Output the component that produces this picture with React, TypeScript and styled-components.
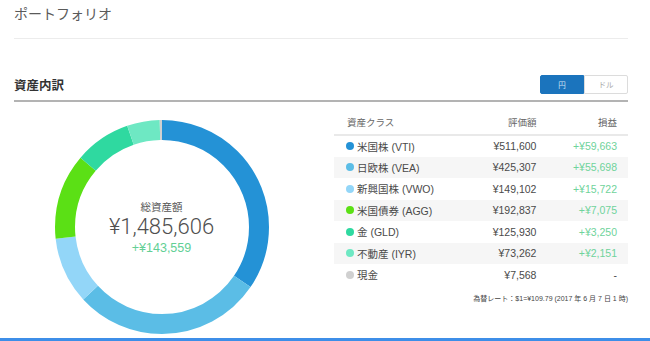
import React from "react";
import styled, { createGlobalStyle } from "styled-components";

const GlobalStyle = createGlobalStyle`
  body {
    margin: 0;
    background: #fff;
    font-family: "Liberation Sans", "Noto Sans CJK JP", sans-serif;
    color: #555;
  }
`;

type Asset = { name: string; color: string; value: number; gain: number | null };

const assets: Asset[] = [
  { name: "米国株 (VTI)", color: "#2492d6", value: 511600, gain: 59663 },
  { name: "日欧株 (VEA)", color: "#5bbde6", value: 425307, gain: 55698 },
  { name: "新興国株 (VWO)", color: "#93d6f8", value: 149102, gain: 15722 },
  { name: "米国債券 (AGG)", color: "#5be015", value: 192837, gain: 7075 },
  { name: "金 (GLD)", color: "#2fd9a0", value: 125930, gain: 3250 },
  { name: "不動産 (IYR)", color: "#6ee8c3", value: 73262, gain: 2151 },
  { name: "現金", color: "#d0d0d0", value: 7568, gain: null },
];

const yen = (n: number) => "¥" + n.toLocaleString("en-US");

const Page = styled.div`
  display: flex;
  flex-direction: column;
  height: 338px;
  padding: 0 22px 0 14px;
`;

const PageTitle = styled.h1`
  margin: 0;
  padding: 5px 0 0 0;
  height: 39px;
  box-sizing: border-box;
  border-bottom: 1px solid #ececec;
  font-size: 14px;
  font-weight: normal;
  color: #5a5a5a;
  line-height: 18px;
`;

const SectionHeader = styled.div`
  display: flex;
  align-items: center;
  justify-content: space-between;
  margin-top: 36px;
  padding-bottom: 6px;
  border-bottom: 2px solid #b3b3b3;
`;

const SectionTitle = styled.h2`
  margin: 0;
  font-size: 12.5px;
  font-weight: bold;
  color: #333;
`;

const Toggle = styled.div`
  display: flex;
  height: 19px;
`;

const ToggleButton = styled.div<{ $active?: boolean }>`
  width: 44px;
  box-sizing: border-box;
  display: flex;
  align-items: center;
  justify-content: center;
  font-size: 7.5px;
  background: ${(p) => (p.$active ? "#1b74bd" : "#fff")};
  color: ${(p) => (p.$active ? "#cfe3f4" : "#aaa")};
  border: 1px solid ${(p) => (p.$active ? "#1b74bd" : "#dcdcdc")};
  border-radius: ${(p) => (p.$active ? "2px 0 0 2px" : "0 2px 2px 0")};
`;

const Body = styled.div`
  display: flex;
  align-items: flex-start;
`;

const ChartBox = styled.div`
  position: relative;
  width: 295px;
  display: flex;
  justify-content: center;
  margin-top: 18px;
`;

const CenterLabel = styled.div`
  position: absolute;
  top: 0;
  left: 0;
  right: 0;
  height: 214px;
  display: flex;
  flex-direction: column;
  align-items: center;
  justify-content: center;
  padding-top: 1px;
  box-sizing: border-box;
`;

const CenterCaption = styled.div`
  font-size: 10.5px;
  color: #555;
  line-height: 14px;
`;

const CenterTotal = styled.div`
  font-family: Roboto, "Liberation Sans", sans-serif;
  font-weight: 300;
  font-size: 22px;
  color: #4f4f4f;
  line-height: 26px;
`;

const CenterGain = styled.div`
  font-size: 12.5px;
  color: #62cf95;
  line-height: 16px;
`;

const TableWrap = styled.div`
  margin-left: 25px;
  width: 294px;
  margin-top: 8px;
`;

const Table = styled.table`
  width: 100%;
  border-collapse: collapse;
`;

const HeadCell = styled.th<{ $align?: string }>`
  font-size: 9.5px;
  font-weight: normal;
  color: #666;
  height: 24px;
  padding: 0 11px 0 13px;
  text-align: ${(p) => p.$align || "left"};
  border-bottom: 2px solid #e9e9e9;
`;

const Row = styled.tr<{ $shade: boolean }>`
  background: ${(p) => (p.$shade ? "#f6f6f6" : "#fff")};
  height: 21.5px;
`;

const Cell = styled.td<{ $align?: string; $gain?: boolean }>`
  font-size: 10.5px;
  padding: 0 11px 0 12px;
  color: ${(p) => (p.$gain ? "#6fd39b" : "#4a4a4a")};
  text-align: ${(p) => p.$align || "left"};
  white-space: nowrap;
`;

const NameCell = styled.span`
  display: flex;
  align-items: center;
  gap: 3px;
`;

const Dot = styled.span<{ $color: string }>`
  width: 8px;
  height: 8px;
  border-radius: 50%;
  background: ${(p) => p.$color};
  flex-shrink: 0;
`;

const Note = styled.div`
  text-align: right;
  font-size: 7px;
  color: #444;
  margin-top: 7px;
`;

const BottomBar = styled.div`
  height: 3px;
  background: #3d8ee8;
`;

function Donut() {
  const r = 97;
  const c = 2 * Math.PI * r;
  const total = assets.reduce((s, a) => s + a.value, 0);
  let start = 0;
  return (
    <svg width={214} height={214} viewBox="0 0 214 214">
      <g transform="rotate(-90 107 107)">
        {assets.map((a) => {
          const len = (a.value / total) * c;
          const el = (
            <circle
              key={a.name}
              cx={107}
              cy={107}
              r={r}
              fill="none"
              stroke={a.color}
              strokeWidth={20}
              strokeDasharray={`${len} ${c - len}`}
              strokeDashoffset={-start}
            />
          );
          start += len;
          return el;
        })}
      </g>
    </svg>
  );
}

export default function App() {
  return (
    <>
      <GlobalStyle />
      <Page>
        <PageTitle>ポートフォリオ</PageTitle>
        <SectionHeader>
          <SectionTitle>資産内訳</SectionTitle>
          <Toggle>
            <ToggleButton $active>円</ToggleButton>
            <ToggleButton>ドル</ToggleButton>
          </Toggle>
        </SectionHeader>
        <Body>
          <ChartBox>
            <Donut />
            <CenterLabel>
              <CenterCaption>総資産額</CenterCaption>
              <CenterTotal>¥1,485,606</CenterTotal>
              <CenterGain>+¥143,559</CenterGain>
            </CenterLabel>
          </ChartBox>
          <TableWrap>
            <Table>
              <thead>
                <tr>
                  <HeadCell>資産クラス</HeadCell>
                  <HeadCell $align="right">評価額</HeadCell>
                  <HeadCell $align="right">損益</HeadCell>
                </tr>
              </thead>
              <tbody>
                {assets.map((a, i) => (
                  <Row key={a.name} $shade={i % 2 === 1}>
                    <Cell>
                      <NameCell>
                        <Dot $color={a.color} />
                        {a.name}
                      </NameCell>
                    </Cell>
                    <Cell $align="right">{yen(a.value)}</Cell>
                    <Cell $align="right" $gain={a.gain !== null}>
                      {a.gain !== null ? "+" + yen(a.gain) : "-"}
                    </Cell>
                  </Row>
                ))}
              </tbody>
            </Table>
            <Note>為替レート：$1=¥109.79 (2017 年 6 月 7 日 1 時)</Note>
          </TableWrap>
        </Body>
      </Page>
      <BottomBar />
    </>
  );
}
